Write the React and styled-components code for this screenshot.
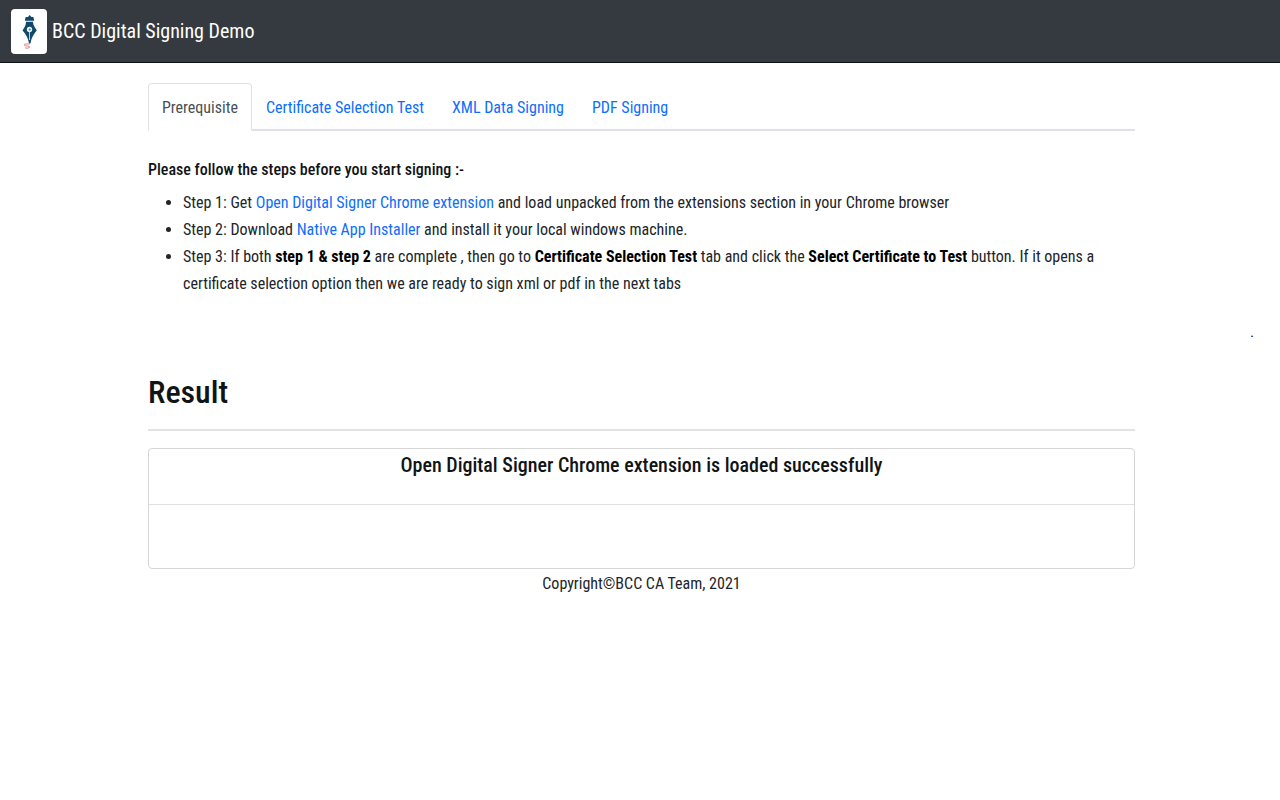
import { useState } from "react";
import styled, { createGlobalStyle } from "styled-components";

const GlobalStyle = createGlobalStyle`
  *,
  *::before,
  *::after {
    box-sizing: border-box;
  }
  body {
    margin: 0;
    background: #fff;
    color: #212529;
    font-family: "Roboto Condensed", "Open Sans", sans-serif;
    font-size: 16px;
    line-height: 27px;
  }
`;

const Navbar = styled.header`
  display: flex;
  align-items: center;
  height: 63px;
  padding: 0 11px;
  background: #343a40;
  border-bottom: 1px solid #0e1217;
`;

const Brand = styled.a`
  display: flex;
  align-items: center;
  gap: 5px;
  color: #fff;
  font-size: 20px;
  line-height: 32px;
  text-decoration: none;
`;

const Logo = styled.svg`
  width: 36px;
  height: 45px;
  border-radius: 4px;
  background: #fff;
`;

const Container = styled.main`
  padding: 20px 145px 0 148px;
`;

const Tabs = styled.nav`
  display: flex;
  border-bottom: 2px solid #dee2e6;
`;

const Tab = styled.a`
  height: 48px;
  margin-bottom: -2px;
  padding: 10px 13px;
  border: 1px solid transparent;
  border-radius: 4px 4px 0 0;
  color: #0d6efd;
  text-decoration: none;
  ${({ $active }) =>
    $active &&
    `
    color: #495057;
    background: #fff;
    border-color: #dee2e6 #dee2e6 #fff;
  `}
`;

const Intro = styled.h6`
  margin: 25px 0 6px;
  color: #111417;
  font-size: 16px;
  font-weight: 500;
`;

const Steps = styled.ul`
  margin: 0;
  padding-left: 35px;
  a {
    color: #0d6efd;
    text-decoration: none;
  }
  b {
    color: #000;
  }
`;

const Dot = styled.div`
  padding: 25px 26px 0 0;
  color: #000;
  font-size: 14px;
  line-height: 20px;
  text-align: right;
`;

const Result = styled.section`
  padding: 29px 145px 0 148px;
`;

const Title = styled.h2`
  margin: 0;
  padding-bottom: 15px;
  border-bottom: 2px solid #e3e3e4;
  color: #111417;
  font-size: 32px;
  font-weight: 500;
  line-height: 43px;
`;

const Card = styled.div`
  margin-top: 17px;
  border: 1px solid #d6d6d7;
  border-radius: 4px;
`;

const CardHeader = styled.div`
  height: 56px;
  border-bottom: 1px solid #dfdfdf;
  text-align: center;
  h5 {
    margin: 0;
    color: #111417;
    font-size: 20px;
    font-weight: 500;
    line-height: 32px;
  }
`;

const CardBody = styled.div`
  height: 63px;
`;

const Footer = styled.footer`
  padding-top: 1px;
  text-align: center;
`;

const tabs = [
  { id: "prerequisite", label: "Prerequisite" },
  { id: "certificate", label: "Certificate Selection Test" },
  { id: "xml", label: "XML Data Signing" },
  { id: "pdf", label: "PDF Signing" },
];

function PenLogo() {
  return (
    <Logo viewBox="0 0 36 45" aria-hidden="true">
      <path d="M14.500 8 L17 8 L18.500 6 L20.500 8 L22.500 8 V9.500 L23 10 V11.800 H14 V10 L14.500 9.500Z" fill="#12496b" />
      <path d="M15 12.800 H22 C22 16.500 24 18.500 25.800 21.500 C23 25 20.500 28 19.500 34.500 H18 C17 28 14.500 25 11.500 21.500 C13.500 18.500 15 16.500 15 12.800Z" fill="#12496b" />
      <circle cx="18.500" cy="20.500" r="2.700" fill="#e4f1f5" />
      <circle cx="18.800" cy="20.500" r="1.100" fill="#4d8ca7" />
      <path d="M18.500 23 V31" stroke="#b7d5df" strokeWidth="1" />
      <path d="M19 35 H14.500 Q12.500 35 13.500 36.500 Q14 37 16.500 37 Q19.500 37.500 18.500 38.500 Q17.500 39.500 14 39" fill="none" stroke="#df8585" strokeWidth="1" />
    </Logo>
  );
}

function App() {
  const [active, setActive] = useState("prerequisite");

  return (
    <>
      <GlobalStyle />
      <Navbar>
        <Brand href="#">
          <PenLogo />
          BCC Digital Signing Demo
        </Brand>
      </Navbar>
      <Container>
        <Tabs>
          {tabs.map((tab) => (
            <Tab
              key={tab.id}
              href={`#${tab.id}`}
              $active={tab.id === active}
              onClick={() => setActive(tab.id)}
            >
              {tab.label}
            </Tab>
          ))}
        </Tabs>
        <Intro>Please follow the steps before you start signing :-</Intro>
        <Steps>
          <li>
            Step 1: Get <a href="#extension">Open Digital Signer Chrome extension</a> and load
            unpacked from the extensions section in your Chrome browser
          </li>
          <li>
            Step 2: Download <a href="#installer">Native App Installer</a> and install it your
            local windows machine.
          </li>
          <li>
            Step 3: If both <b>step 1 &amp; step 2</b> are complete , then go to{" "}
            <b>Certificate Selection Test</b> tab and click the{" "}
            <b>Select Certificate to Test</b> button. If it opens a certificate selection option
            then we are ready to sign xml or pdf in the next tabs
          </li>
        </Steps>
      </Container>
      <Dot>.</Dot>
      <Result>
        <Title>Result</Title>
        <Card>
          <CardHeader>
            <h5>Open Digital Signer Chrome extension is loaded successfully</h5>
          </CardHeader>
          <CardBody />
        </Card>
        <Footer>Copyright©BCC CA Team, 2021</Footer>
      </Result>
    </>
  );
}

export default App;
